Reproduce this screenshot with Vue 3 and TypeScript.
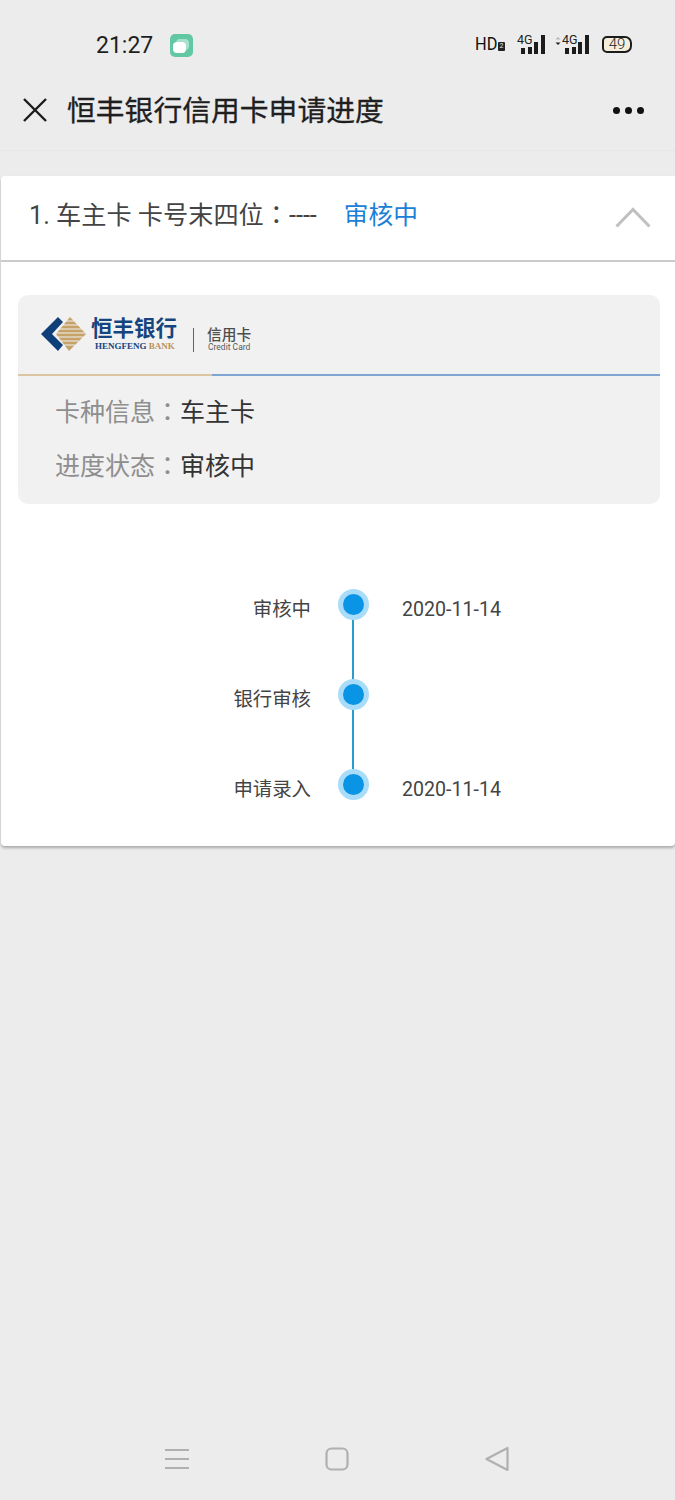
<script setup lang="ts">
interface Step {
  name: string;
  date: string;
}

const steps: Step[] = [
  { name: '审核中', date: '2020-11-14' },
  { name: '银行审核', date: '' },
  { name: '申请录入', date: '2020-11-14' },
];

const signalBars = [6, 7, 12, 19];
</script>

<template>
  <div class="page">
    <div class="status">
      <span class="status__time">21:27</span>
      <span class="status__app"><i /></span>
      <div class="status__right">
        <span class="status__hd"><b>HD</b></span>
        <span class="status__sim">2</span>
        <div class="signal">
          <span class="signal__label">4G</span>
          <i v-for="h in signalBars" :key="h" :style="{ height: h + 'px' }" />
        </div>
        <div class="signal signal--second">
          <svg class="signal__arrows" width="6" height="10" viewBox="0 0 6 10">
            <path d="M0.5 3.6 3 1 5.5 3.6Z" fill="#b5b5b5" />
            <path d="M0.5 6.4 3 9 5.5 6.4Z" fill="#222" />
          </svg>
          <span class="signal__label">4G</span>
          <i v-for="h in signalBars" :key="h" :style="{ height: h + 'px' }" />
        </div>
        <div class="battery"><span>49</span></div>
      </div>
    </div>

    <header class="nav">
      <svg class="nav__close" width="26" height="26" viewBox="0 0 26 26">
        <path d="M2 2 24 24M24 2 2 24" stroke="#1c1c1c" stroke-width="2.4" fill="none" />
      </svg>
      <h1 class="nav__title">恒丰银行信用卡申请进度</h1>
      <div class="nav__more"><i /><i /><i /></div>
    </header>

    <section class="card">
      <div class="card__head">
        <span class="card__name">1. 车主卡 卡号末四位：----</span>
        <span class="card__state">审核中</span>
        <svg class="card__arrow" width="36" height="22" viewBox="0 0 36 22">
          <path d="M1.5 20.5 18 3.5 34.5 20.5" stroke="#c0c0c0" stroke-width="3" fill="none" />
        </svg>
      </div>

      <div class="info">
        <div class="info__brand">
          <svg class="logo" width="47" height="36" viewBox="0 0 47 36">
            <path d="M1 18 18 1 23 6 12 18 23 29 18 35Z" fill="#0f3f78" />
            <path d="M30 1 46 18 29 35 16 18Z" fill="#c5a368" />
            <path d="M26 5H34M22 9H38M19 13H42M16 17H45M18 21H43M20 25H39M23 29H35" stroke="#f1f1f1" stroke-width="1" />
          </svg>
          <div class="bank">
            <span class="bank__cn">恒丰银行</span>
            <span class="bank__en">HENGFENG <em>BANK</em></span>
          </div>
          <i class="brand__rule" />
          <div class="credit">
            <span class="credit__cn">信用卡</span>
            <span class="credit__en">Credit Card</span>
          </div>
        </div>
        <div class="info__line"><i /><i /></div>
        <div class="info__rows">
          <p><span>卡种信息：</span>车主卡</p>
          <p><span>进度状态：</span>审核中</p>
        </div>
      </div>

      <ul class="steps">
        <li v-for="step in steps" :key="step.name" class="step">
          <span class="step__name">{{ step.name }}</span>
          <span class="step__dot" />
          <span class="step__date">{{ step.date }}</span>
        </li>
      </ul>
    </section>

    <div class="spacer" />

    <footer class="softkeys">
      <svg width="24" height="22" viewBox="0 0 24 22">
        <path d="M0 2H24M0 11H24M0 20H24" stroke="#b0b0b0" stroke-width="2" />
      </svg>
      <svg width="24" height="24" viewBox="0 0 24 24">
        <rect x="1.5" y="1.5" width="21" height="21" rx="5" stroke="#b0b0b0" stroke-width="2.2" fill="none" />
      </svg>
      <svg width="24" height="26" viewBox="0 0 24 26">
        <path d="M22.5 2V24L1.5 13Z" stroke="#b0b0b0" stroke-width="2.2" stroke-linejoin="round" fill="none" />
      </svg>
    </footer>
  </div>
</template>

<style>
html,
body {
  margin: 0;
  background: #ececec;
}
</style>

<style scoped>
.page {
  width: 675px;
  height: 1500px;
  display: flex;
  flex-direction: column;
  background: #ececec;
  font-family: Roboto, "Noto Sans CJK SC", sans-serif;
  color: #2b2b2b;
  overflow: hidden;
}

.status {
  height: 76px;
  padding: 14px 43px 0 96px;
  box-sizing: border-box;
  display: flex;
  align-items: center;
  flex: none;
}

.status__time {
  font-size: 23px;
  color: #1e1e1e;
}

.status__app {
  width: 23px;
  height: 23px;
  margin-left: 17px;
  border-radius: 5px;
  background: #62c8a4;
  display: flex;
  align-items: center;
  justify-content: center;
}

.status__app i {
  width: 13px;
  height: 11px;
  border-radius: 4px;
  background: #fff;
  box-shadow: 3px -3px 0 0 rgba(255, 255, 255, 0.45);
  transform: translate(-2px, 2px);
}

.status__right {
  margin: 0 0 2px auto;
  display: flex;
  align-items: flex-end;
  height: 20px;
}

.status__hd {
  width: 23px;
  height: 20px;
  font-size: 19px;
  line-height: 20px;
  color: #111;
}

.status__hd b {
  display: inline-block;
  font-weight: 400;
  transform: scaleX(0.86);
  transform-origin: left;
}

.status__sim {
  width: 7px;
  height: 9px;
  margin-bottom: 3px;
  background: #222;
  border-radius: 1px;
  color: #eee;
  font-size: 7px;
  line-height: 9px;
  text-align: center;
}

.signal {
  display: flex;
  align-items: flex-end;
  gap: 2.67px;
  height: 20px;
  margin-left: 14px;
  position: relative;
  padding-left: 2px;
}

.signal--second {
  margin-left: 10px;
  padding-left: 10px;
}

.signal i {
  width: 4px;
  background: #1c1c1c;
}

.signal__label {
  position: absolute;
  left: -2px;
  top: 0;
  font-size: 12.5px;
  line-height: 12px;
  color: #222;
}

.signal--second .signal__label {
  left: 7px;
}

.signal__arrows {
  position: absolute;
  left: 0;
  top: 2px;
}

.battery {
  width: 30px;
  height: 17px;
  margin: 0 0 1px 13px;
  box-sizing: border-box;
  border: 2px solid #1c1c1c;
  border-radius: 5px 7px 7px 5px;
  background: #f5eedd;
  display: flex;
  align-items: center;
  justify-content: center;
}

.battery span {
  font-size: 15px;
  line-height: 13px;
  font-weight: 300;
  color: #222;
}

.nav {
  height: 75px;
  flex: none;
  box-sizing: border-box;
  padding: 0 31px 6px 22px;
  border-bottom: 1px solid #e6e6e6;
  display: flex;
  align-items: center;
}

.nav__close {
  flex: none;
}

.nav__title {
  margin: 0 0 3px 19px;
  font-size: 28.8px;
  font-weight: 400;
  color: #1f1f1f;
  -webkit-text-stroke: 0.3px #1f1f1f;
}

.nav__more {
  margin-left: auto;
  display: flex;
  gap: 5px;
}

.nav__more i {
  width: 7px;
  height: 7px;
  border-radius: 50%;
  background: #111;
}

.card {
  margin: 25px 0 0 1px;
  height: 670px;
  flex: none;
  background: #fff;
  border-radius: 4px 0 4px 4px;
  box-shadow: 0 2px 3px rgba(0, 0, 0, 0.28);
}

.card__head {
  height: 86px;
  box-sizing: border-box;
  border-bottom: 2px solid #cbcbcb;
  padding: 0 24px 10px 28px;
  display: flex;
  align-items: center;
}

.card__name {
  color: #444;
  font-size: 25.2px;
  font-family: Roboto, "Noto Sans CJK TC", sans-serif;
}

.card__state {
  margin-left: 27px;
  font-size: 24.7px;
  color: #1a80d8;
}

.card__arrow {
  margin: 7px 0 0 auto;
}

.info {
  margin: 33px 15px 0 17px;
  background: #f1f1f1;
  border-radius: 10px;
  height: 209px;
  overflow: hidden;
}

.info__brand {
  height: 79px;
  box-sizing: border-box;
  padding: 0 0 1px 22px;
  display: flex;
  align-items: center;
}

.bank {
  display: flex;
  flex-direction: column;
  margin-left: 4px;
}

.bank__cn {
  font-size: 21.5px;
  line-height: 24px;
  font-weight: 700;
  color: #15457e;
}

.bank__en {
  margin-left: 4px;
  font-family: "Liberation Serif", serif;
  font-size: 9px;
  line-height: 10px;
  font-weight: 700;
  color: #15457e;
}

.bank__en em {
  font-style: normal;
  color: #b8925a;
}

.brand__rule {
  width: 1px;
  height: 24px;
  margin: 12px 0 0 16px;
  background: #3a6a98;
}

.credit {
  display: flex;
  flex-direction: column;
  margin: 11px 0 0 13px;
}

.credit__cn {
  font-size: 14.7px;
  line-height: 15px;
  font-weight: 500;
  color: #4d4d4d;
}

.credit__en {
  margin-left: 1px;
  font-size: 8.5px;
  line-height: 9px;
  color: #5a5a5a;
}

.info__line {
  display: flex;
  height: 2px;
}

.info__line i:first-child {
  width: 194px;
  background: #dcc5a2;
}

.info__line i:last-child {
  flex: 1;
  background: #7fa5d2;
}

.info__rows {
  padding: 10px 0 0 37px;
  font-size: 25px;
  color: #333;
  font-family: Roboto, "Noto Sans CJK TC", sans-serif;
}

.info__rows p {
  margin: 0;
  height: 54px;
  line-height: 54px;
}

.info__rows span {
  color: #8e8e8e;
}

.steps {
  list-style: none;
  margin: 85px 0 0;
  padding: 0;
}

.step {
  display: grid;
  grid-template-columns: 310px 31px 1fr;
  height: 90px;
  position: relative;
}

.step:not(:last-child)::after {
  content: "";
  position: absolute;
  left: 351px;
  top: 20px;
  width: 1.5px;
  height: 90px;
  background: #2a9ccb;
}

.step__name {
  text-align: right;
  font-size: 19.4px;
  line-height: 28px;
  padding-top: 7px;
  color: #444;
}

.step__dot {
  margin-left: 27px;
  width: 21px;
  height: 21px;
  border-radius: 50%;
  background: #0a94e6;
  border: 5px solid #a9dcf8;
  position: relative;
  z-index: 1;
}

.step__date {
  margin-left: 60px;
  white-space: nowrap;
  font-size: 19.6px;
  line-height: 28px;
  padding-top: 7px;
  color: #444;
}

.spacer {
  flex: 1;
}

.softkeys {
  height: 80px;
  flex: none;
  box-sizing: border-box;
  padding: 0 166px 2px 165px;
  display: flex;
  align-items: center;
  justify-content: space-between;
}
</style>
